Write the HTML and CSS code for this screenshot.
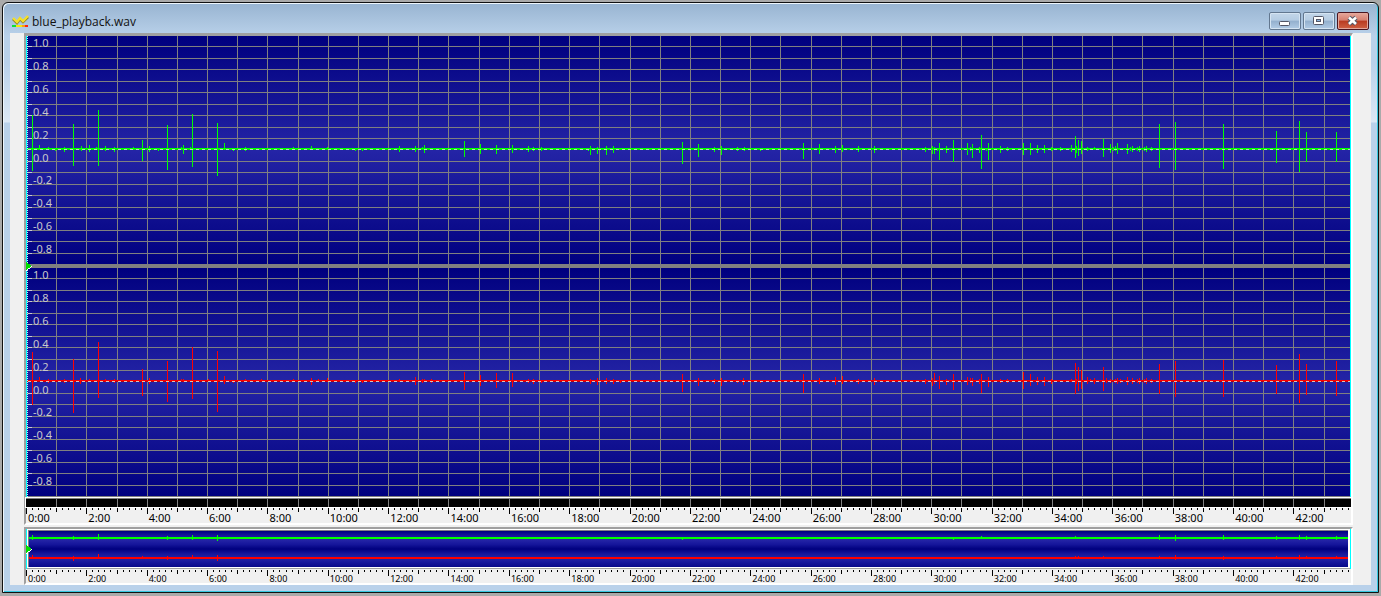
FILE: index.html
```html
<!DOCTYPE html>
<html lang="en">
<head>
<meta charset="utf-8">
<title>blue_playback.wav</title>
<link rel="stylesheet" href="styles.css">
</head>
<body>
<main class="window">
  <header class="titlebar">
    <svg class="app-icon" viewBox="0 0 17 13" aria-hidden="true">
      <path d="M1 3L5 7L8 3L11 6L16 1" fill="none" stroke="#8f8420" stroke-width="2.600" transform="translate(0 1)"/>
      <path d="M1 3L5 7L8 3L11 6L16 1" fill="none" stroke="#f5e02a" stroke-width="2.400"/>
      <path d="M0 10h4v2h-4z" fill="#0be03c"/>
      <path d="M4 10h8v2h-8z" fill="#f6e90c"/>
      <path d="M10 10h3v2h-3z" fill="#ff9c10"/>
      <path d="M13 10h3v2h-3z" fill="#fb2410"/>
    </svg>
    <h1 class="title">blue_playback.wav</h1>
    <div class="controls">
      <button class="control" type="button" aria-label="Minimize">
        <svg viewBox="0 0 12 12"><rect x=".5" y="6.500" width="10" height="4" rx="1" fill="#fff" stroke="#535666"/></svg>
      </button>
      <button class="control" type="button" aria-label="Restore">
        <svg viewBox="0 0 12 12"><rect x=".5" y="1.500" width="10" height="8" rx="1" fill="#fff" stroke="#535666"/><rect x="3.500" y="4.500" width="4" height="2" fill="#8db5e2" stroke="#535666"/></svg>
      </button>
      <button class="control close" type="button" aria-label="Close">
        <svg viewBox="0 0 12 12"><path d="M2 2.500L9 9M9 2.500L2 9" fill="none" stroke="#535666" stroke-width="4.600"/><path d="M2 2.500L9 9M9 2.500L2 9" fill="none" stroke="#fff" stroke-width="2.600"/></svg>
      </button>
    </div>
  </header>
  <section class="client">
    <div class="panel main-panel">
      <div class="plot">
        <svg id="wave" class="wave" viewBox="0 0 1325 461" preserveAspectRatio="none" aria-label="Waveform"></svg>
        <div class="levels">
          <ul class="level-list"></ul>
          <ul class="level-list"></ul>
        </div>
      </div>
      <svg id="strip" class="strip" viewBox="0 0 1325 8" preserveAspectRatio="none"></svg>
      <div class="ruler">
        <svg class="ticks" viewBox="0 0 1325 7" preserveAspectRatio="none"></svg>
        <div class="times"></div>
      </div>
    </div>
    <div class="panel overview-panel">
      <svg id="overview" class="overview" viewBox="0 0 1325 40" preserveAspectRatio="none" aria-label="Overview"></svg>
      <div class="ruler small">
        <svg class="ticks" viewBox="0 0 1325 7" preserveAspectRatio="none"></svg>
        <div class="times"></div>
      </div>
    </div>
  </section>
</main>
<script src="plot.js"></script>
</body>
</html>
```

FILE: styles.css
```css
* {
  box-sizing: border-box;
}

body {
  margin: 0;
  padding: 2px 2px 3px;
  background: #aaa;
  font-family: "Noto Sans", "Open Sans", sans-serif;
  color: #000;
}

.window {
  border: 1px solid #111;
  border-radius: 6px 6px 0 0;
  padding: 1px 7px 7px;
  background: linear-gradient(#98b4d1 0, #b9d1ea 33px, #b9d1ea 60px, #dce8f5 119px, #b9d1ea 120px);
  box-shadow: inset 1px 1px 0 #eef6fc, inset -1px -1px 0 #35c8e0;
}

.titlebar {
  display: flex;
  align-items: flex-start;
  height: 29px;
  padding: 8px 2px 0;
}

.app-icon {
  width: 17px;
  height: 13px;
  margin: 3px 3px 0 0;
}

.title {
  flex: 1;
  margin: 0;
  font-family: "Open Sans", "Noto Sans", sans-serif;
  font-size: 12px;
  line-height: 20px;
  font-weight: 400;
  color: #111;
}

.controls {
  display: flex;
  gap: 2px;
}

.control {
  display: grid;
  place-items: center;
  width: 32px;
  height: 18px;
  padding: 0;
  border: 1px solid #62778f;
  border-radius: 2px;
  background: linear-gradient(#c3d6e9 0, #b5cce3 45%, #93afcd 50%, #b2cce6);
  box-shadow: inset 0 0 0 1px #d5e4f2;
}

.control svg {
  width: 12px;
  height: 12px;
}

.close {
  border-color: #4b1520;
  background: linear-gradient(#e6a79b 0, #d67f70 45%, #b93a21 50%, #cf6144);
  box-shadow: inset 0 0 0 1px #e3a79c;
}

.client {
  display: grid;
  gap: 2px;
  padding: 0 18px 0 14px;
  background: #f0f0f0;
}

.panel {
  border: solid #a0a0a0;
  border-width: 3px 0 0 2px;
  border-bottom: 2px solid #fff;
  border-right: 2px solid #fff;
}

.overview-panel {
  border-top-width: 2px;
}

.plot {
  position: relative;
}

svg {
  display: block;
}

.wave,
.strip,
.overview,
.ticks {
  width: 100%;
  shape-rendering: crispEdges;
}

.wave {
  height: 461px;
}

.levels {
  position: absolute;
  inset: 0;
  display: grid;
  grid-template-rows: 1fr 1fr;
  gap: 3px;
}

.level-list {
  display: flex;
  flex-direction: column;
  margin: 0;
  padding: 0 0 0 7px;
  list-style: none;
  font-size: 11px;
  line-height: 14px;
  color: #c8c8cc;
}

.level-list li {
  flex: 1;
}

.strip {
  height: 8px;
  border-top: 1px solid #808080;
  box-sizing: content-box;
  margin-top: 1px;
  background: #000;
  outline: 1px solid #fff;
}

.ruler {
  display: grid;
  height: 16px;
  background: #f0f0f0;
}

.ticks,
.times {
  grid-area: 1 / 1;
}

.ticks {
  height: 7px;
}

.times {
  display: flex;
  align-self: end;
  font-size: 11px;
  line-height: 11px;
}

.times span {
  flex: 200 1 0;
  min-width: 0;
  padding-left: 2px;
}

.times span:last-child {
  flex-grow: 190;
}

.overview {
  height: 40px;
}

.small {
  height: 14px;
}

.small .times {
  font-size: 9px;
  line-height: 9px;
}
```

FILE: plot.js
```js
const WIDTH = 1325;
const LEFT = 26;
const MINUTE = 30.175;
const MINUTES = 43;

// Each peak: [x, top, bottom].
const green = [
  [32,115,171],[39,145,149],[48,147,149],[55,148,151],[64,147,152],[73,124,166],[81,146,151],[89,145,152],[96,147,149],
  [98,110,166],[105,146,151],[114,147,152],[133,147,150],[142,140,161],[149,146,152],[158,148,151],[167,125,170],
  [181,147,150],[183,145,154],[190,147,149],[192,114,167],[217,123,176],[224,143,150],[233,148,151],[245,147,151],
  [293,147,149],[311,146,150],[327,147,150],[355,148,151],[362,148,151],[399,146,152],[415,146,152],[422,147,149],[424,145,153],
  [464,141,157],[480,144,154],[496,145,154],[512,145,153],[528,146,152],[533,147,151],[541,147,151],[588,148,151],
  [590,146,155],[597,147,154],[606,146,155],[613,146,153],[682,142,164],[698,144,157],[714,147,152],[721,146,155],
  [737,147,151],[744,147,151],[760,148,151],[803,143,159],[819,144,154],[835,146,153],[842,145,152],[858,146,152],[874,146,153],
  [925,147,152],[932,146,154],[934,147,154],[937,148,151],[939,143,160],[946,146,153],[953,140,162],[967,143,155],[970,147,151],
  [972,144,158],[979,147,153],[981,135,169],[986,148,151],[988,143,160],[1000,146,153],[1007,147,151],[1023,143,155],
  [1030,143,155],[1037,145,153],[1044,145,153],[1051,147,151],[1060,147,151],[1071,145,152],[1075,136,158],[1076,146,153],
  [1078,140,156],[1081,141,154],[1087,147,151],[1094,147,149],[1103,139,157],[1110,144,153],[1113,147,151],[1115,146,151],
  [1117,143,154],[1127,144,154],[1130,147,151],[1132,146,152],[1137,147,151],[1139,146,152],[1144,147,151],[1146,146,152],
  [1151,147,151],[1159,124,168],[1175,122,170],[1223,124,169],[1276,131,163],[1299,121,172],[1306,132,162],[1336,132,162]
];
const red = [
  [32,352,405],[39,377,381],[48,379,383],[64,379,383],[73,359,413],[80,378,384],[89,379,382],[98,342,398],[105,379,382],[114,379,383],
  [142,369,396],[149,378,384],[167,361,402],[181,379,381],[183,379,382],[192,347,399],[208,379,381],[217,351,412],
  [224,376,384],[233,380,383],[245,379,382],[261,379,381],[293,379,382],[311,378,385],[318,379,381],[327,378,382],
  [355,380,383],[362,380,383],[399,379,382],[415,377,385],[422,379,383],[424,379,382],[431,379,383],
  [464,372,390],[480,375,386],[496,373,388],[512,373,387],[528,379,383],[533,379,384],[541,380,383],[590,379,384],
  [597,378,385],[606,378,384],[613,379,384],[620,380,383],[682,374,392],[698,378,386],[714,379,384],[721,378,386],
  [737,380,383],[743,378,385],[760,380,383],[803,374,393],[819,378,384],[835,377,385],[842,376,384],[858,379,384],[874,378,385],
  [925,379,384],[932,378,386],[934,373,384],[939,376,389],[946,379,385],[953,374,390],[967,377,385],[970,378,383],
  [972,378,386],[979,379,384],[981,374,393],[988,377,387],[1000,379,383],[1007,379,383],[1023,372,389],[1030,374,386],
  [1037,377,385],[1044,377,386],[1051,379,384],[1071,379,382],[1075,363,394],[1076,379,384],[1078,367,391],[1081,370,389],
  [1087,377,384],[1090,379,382],[1094,378,384],[1103,367,391],[1106,378,383],[1110,379,383],[1115,379,383],[1117,378,384],
  [1120,379,383],[1127,377,385],[1132,378,384],[1137,379,383],[1139,378,384],[1144,379,383],[1146,378,384],[1151,379,383],
  [1159,364,394],[1175,361,397],[1223,360,397],[1276,365,394],[1299,354,403],[1306,364,395],[1336,361,396]
];
const miniGreen = [
  [32,535,540],[73,536,540],[98,534,540],[167,536,540],[192,535,540],[217,535,541],[682,537,540],[953,537,540],
  [981,536,539],[1075,536,539],[1159,535,540],[1175,535,541],[1223,535,540],[1276,536,540],[1299,535,540],[1306,536,540],[1336,536,540]
];
const miniRed = [
  [32,555,559],[73,556,561],[98,554,559],[142,556,559],[167,556,560],[192,555,559],[217,555,561],
  [1075,556,559],[1078,556,559],[1103,556,559],[1159,556,559],[1175,555,560],[1223,556,560],[1276,556,559],[1299,555,560],[1306,556,559],[1336,556,559]
];

const rect = (x, y, w, h, fill) => `<rect x="${x}" y="${y}" width="${w}" height="${h}" fill="${fill}"/>`;
const peaks = (list, top, fill) => list.map(([x, a, b]) => rect(x - LEFT, a - top, 1, b - a, fill)).join("");
const dashes = (y, x, w, gap, fill) =>
  `<path d="M${x} ${y + 0.5}H${WIDTH}" stroke="${fill}" stroke-dasharray="${w} ${gap}"/>`;
const dots = (x, y0, y1, fill) =>
  `<path d="M${x + 0.5} ${y0}V${y1}" stroke="${fill}" stroke-dasharray="1 1"/>`;
const minuteX = m => Math.floor(m * MINUTE + 0.5);
const marker = y => `<path d="M0 ${y - 3}L6 ${y}V${y + 1}L0 ${y + 5}z" fill="#fff"/><path d="M0 ${y - 4}L6 ${y}L0 ${y + 4}z" fill="#00e000"/>`;

function minuteLines(height) {
  let out = "";
  for (let m = 1; m <= MINUTES; m++) out += rect(minuteX(m), 0, 1, height, "#808080");
  return out;
}

function drawWave() {
  let out = `<defs><linearGradient id="bg" x2="0" y2="1">
    <stop offset="0" stop-color="#00007f"/><stop offset=".5" stop-color="#2424a6"/><stop offset="1" stop-color="#00007f"/>
  </linearGradient></defs>`;
  const rows = [10, 22, 33, 45, 56, 68, 79, 91, 102, 125, 136, 148, 159, 171, 182, 194, 205, 217];
  for (const top of [0, 232]) {
    out += rect(0, top, WIDTH, 229, "url(#bg)");
    for (const y of rows) out += rect(0, top + y, WIDTH, 1, "#808080");
  }
  out += minuteLines(461);
  for (const top of [0, 232]) {
    for (const y of rows) out += rect(2, top + y, 4, 1, "#c8c8d0");
  }
  out += rect(0, 228, WIDTH, 4, "#808080") + rect(0, 460, WIDTH, 1, "#808080");
  out += rect(0, 112, WIDTH, 2, "#00e800") + rect(0, 112, WIDTH, 1, "#00ff00");
  out += rect(0, 344, WIDTH, 1, "#ff0000") + rect(0, 345, WIDTH, 1, "#c00010");
  out += peaks(green, 36, "#00ff00") + peaks(red, 36, "#ff0000");
  out += dashes(113, 2, 3, 3, "#c0dcc0") + dashes(345, 2, 3, 3, "#d8c8b8");
  out += rect(0, 0, 1, 461, "#00ffff") + rect(WIDTH - 1, 0, 1, 461, "#00ffff");
  out += dots(1, 0, 461, "#b8ffff") + marker(230);
  document.getElementById("wave").innerHTML = out;
}

function drawOverview() {
  const stops = ["#00007f", "#15159a", "#2424a6", "#15159a", "#00007f", "#15159a", "#2424a6", "#15159a", "#08088a"];
  let out = `<defs><linearGradient id="mini" x2="0" y2="1">` +
    stops.map((c, i) => `<stop offset="${i / 8}" stop-color="${c}"/>`).join("") + `</linearGradient></defs>`;
  out += rect(0, 0, WIDTH, 40, "#fff") + rect(2, 1, WIDTH - 5, 38, "#808080") + rect(3, 2, WIDTH - 6, 36, "url(#mini)");
  out += rect(2, 38, WIDTH - 3, 1, "#fff") + rect(0, 39, WIDTH, 1, "#a0a0a0");
  out += rect(3, 8, WIDTH - 6, 2, "#00ff00") + rect(3, 28, WIDTH - 6, 2, "#ff0000");
  out += peaks(miniGreen, 529, "#00ff00") + peaks(miniRed, 529, "#ff0000");
  out += rect(0, 0, 1, 40, "#00ffff") + rect(WIDTH - 1, 0, 1, 40, "#00ffff") + marker(20);
  document.getElementById("overview").innerHTML = out;
}

function drawRulers() {
  let ticks = "";
  let labels = "";
  for (let i = 0; i < 220; i++) {
    const height = i % 10 === 0 ? 6 : i % 5 === 0 ? 4 : 2;
    ticks += rect(minuteX(i / 5), 1, 1, height, "#000");
  }
  for (let m = 0; m <= MINUTES; m += 2) labels += `<span>${m}:00</span>`;
  document.querySelectorAll(".ticks").forEach(el => { el.innerHTML = ticks; });
  document.querySelectorAll(".times").forEach(el => { el.innerHTML = labels; });
  document.getElementById("strip").innerHTML = minuteLines(8);
}

function drawLevels() {
  const values = ["1.0", "0.8", "0.6", "0.4", "0.2", "0.0", "-0.2", "-0.4", "-0.6", "-0.8"];
  document.querySelectorAll(".level-list").forEach(el => {
    el.innerHTML = values.map(v => `<li>${v}</li>`).join("");
  });
}

drawWave();
drawOverview();
drawRulers();
drawLevels();
```
